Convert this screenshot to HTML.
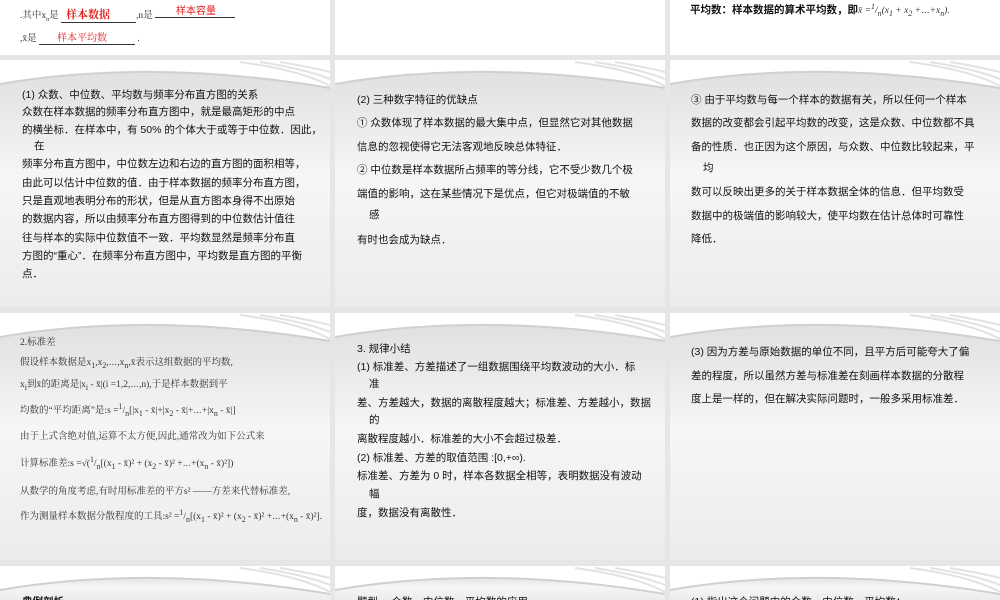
<!DOCTYPE html>
<html style="overflow:hidden;height:600px"><head><meta charset="utf-8"><style>
html,body{overflow:hidden;height:600px}
body{margin:0;width:1000px;background:#e6e6e6;position:relative;font-family:"Liberation Sans","Noto Sans CJK SC",sans-serif;}
.s{position:absolute;background:#fff;overflow:hidden;}
.g{position:absolute;left:0;right:0;top:10px;bottom:0;background:linear-gradient(#e0e0e0,#f6f6f6 45%,#ececec);}
.s svg{position:absolute;left:0;top:0;}
.t{position:absolute;font-size:10.5px;color:#111;white-space:nowrap;}
.sf{font-family:"Liberation Serif","Noto Serif CJK SC",serif;font-size:9.5px;color:#333;}
.r{color:#e02020;}
</style></head><body>
<div class="s" style="left:0;top:0;width:330px;height:55px;"></div>
<div class="s" style="top:0;width:330px;height:55px;left:335px"></div>
<div class="s" style="left:670px;top:0;width:330px;height:55px;"></div>
<div class="t sf" style="left:20px;top:6px;">.其中x<sub style="font-size:6px">n</sub>是 <span style="display:inline-block;width:75px;border-bottom:1px solid #333;" ><b class="r" style="font-size:11px;margin-left:5px">样本数据</b></span>,n是 <span style="display:inline-block;width:80px;border-bottom:1px solid #333;"></span></div>
<div class="t r" style="left:176px;top:2px;font-size:10px;">样本容量</div>
<div class="t sf" style="left:20px;top:29px;">,x̄是 <span style="display:inline-block;width:96px;border-bottom:1px solid #333;"><span class="r" style="margin-left:18px;font-size:10px">样本平均数</span></span> .</div>
<div class="t" style="left:690px;top:2px;font-weight:bold;">平均数：样本数据的算术平均数，即<span class="sf" style="font-weight:normal;font-style:italic">x̄ =<sup>1</sup>/<sub>n</sub>(x<sub>1</sub> + x<sub>2</sub> +⋯+x<sub>n</sub>).</span></div>

<div id="slides"></div>
<script>
var rows=[60,313,566],cols=[0,335,670],h=[247,247,34];
var html='';
rows.forEach(function(y,i){cols.forEach(function(x){
html+='<div class="s" style="left:'+x+'px;top:'+y+'px;width:330px;height:'+h[i]+'px"><div class="g"></div><svg width="330" height="50"><path d="M0 24 Q150 -2 330 28 L330 0 L0 0Z" fill="#fff"/><path d="M0 24 Q150 -2 330 28" stroke="#d0d0d0" stroke-width="2" fill="none"/><path d="M240 2 Q300 10 330 26 M260 2 Q305 9 330 19 M280 2 Q310 7 330 12" stroke="#e2e2e2" stroke-width="2" fill="none"/></svg></div>';
});});
document.getElementById('slides').innerHTML=html;
</script>

<div class="t" style="left:22px;top:87px;">(1) 众数、中位数、平均数与频率分布直方图的关系</div>
<div class="t" style="left:22px;top:104px;">众数在样本数据的频率分布直方图中，就是最高矩形的中点</div>
<div class="t" style="left:22px;top:122px;">的横坐标．在样本中，有 50% 的个体大于或等于中位数．因此，</div>
<div class="t" style="left:34px;top:138px;">在</div>
<div class="t" style="left:22px;top:156px;">频率分布直方图中，中位数左边和右边的直方图的面积相等，</div>
<div class="t" style="left:22px;top:175px;">由此可以估计中位数的值．由于样本数据的频率分布直方图，</div>
<div class="t" style="left:22px;top:193px;">只是直观地表明分布的形状，但是从直方图本身得不出原始</div>
<div class="t" style="left:22px;top:211px;">的数据内容，所以由频率分布直方图得到的中位数估计值往</div>
<div class="t" style="left:22px;top:230px;">往与样本的实际中位数值不一致．平均数显然是频率分布直</div>
<div class="t" style="left:22px;top:248px;">方图的“重心”．在频率分布直方图中，平均数是直方图的平衡</div>
<div class="t" style="left:22px;top:266px;">点．</div>
<div class="t" style="left:357px;top:92px;">(2) 三种数字特征的优缺点</div>
<div class="t" style="left:357px;top:115px;">① 众数体现了样本数据的最大集中点，但显然它对其他数据</div>
<div class="t" style="left:357px;top:139px;">信息的忽视使得它无法客观地反映总体特征．</div>
<div class="t" style="left:357px;top:162px;">② 中位数是样本数据所占频率的等分线，它不受少数几个极</div>
<div class="t" style="left:357px;top:186px;">端值的影响，这在某些情况下是优点，但它对极端值的不敏</div>
<div class="t" style="left:369px;top:207px;">感</div>
<div class="t" style="left:357px;top:232px;">有时也会成为缺点．</div>
<div class="t" style="left:691px;top:92px;">③ 由于平均数与每一个样本的数据有关，所以任何一个样本</div>
<div class="t" style="left:691px;top:115px;">数据的改变都会引起平均数的改变，这是众数、中位数都不具</div>
<div class="t" style="left:691px;top:139px;">备的性质．也正因为这个原因，与众数、中位数比较起来，平</div>
<div class="t" style="left:703px;top:160px;">均</div>
<div class="t" style="left:691px;top:184px;">数可以反映出更多的关于样本数据全体的信息．但平均数受</div>
<div class="t" style="left:691px;top:208px;">数据中的极端值的影响较大，使平均数在估计总体时可靠性</div>
<div class="t" style="left:691px;top:231px;">降低．</div>
<div class="t sf" style="left:20px;top:334px;">2.标准差</div>
<div class="t sf" style="left:20px;top:354px;">假设样本数据是x<sub>1</sub>,x<sub>2</sub>,⋯,x<sub>n</sub>,x̄表示这组数据的平均数,</div>
<div class="t sf" style="left:20px;top:376px;">x<sub>i</sub>到x̄的距离是|x<sub>i</sub> - x̄|(i =1,2,⋯,n),于是样本数据到平</div>
<div class="t sf" style="left:20px;top:402px;">均数的“平均距离”是:s =<sup>1</sup>/<sub>n</sub>[|x<sub>1</sub> - x̄|+|x<sub>2</sub> - x̄|+⋯+|x<sub>n</sub> - x̄|]</div>
<div class="t sf" style="left:20px;top:428px;">由于上式含绝对值,运算不太方便,因此,通常改为如下公式来</div>
<div class="t sf" style="left:20px;top:455px;">计算标准差:s =√(<sup>1</sup>/<sub>n</sub>[(x<sub>1</sub> - x̄)² + (x<sub>2</sub> - x̄)² +⋯+(x<sub>n</sub> - x̄)²])</div>
<div class="t sf" style="left:20px;top:483px;">从数学的角度考虑,有时用标准差的平方s² ——方差来代替标准差,</div>
<div class="t sf" style="left:20px;top:508px;">作为测量样本数据分散程度的工具:s² =<sup>1</sup>/<sub>n</sub>[(x<sub>1</sub> - x̄)² + (x<sub>2</sub> - x̄)² +⋯+(x<sub>n</sub> - x̄)²].</div>
<div class="t" style="left:357px;top:341px;">3. 规律小结</div>
<div class="t" style="left:357px;top:359px;">(1) 标准差、方差描述了一组数据围绕平均数波动的大小．标</div>
<div class="t" style="left:369px;top:376px;">准</div>
<div class="t" style="left:357px;top:395px;">差、方差越大，数据的离散程度越大；标准差、方差越小，数据</div>
<div class="t" style="left:369px;top:412px;">的</div>
<div class="t" style="left:357px;top:431px;">离散程度越小．标准差的大小不会超过极差．</div>
<div class="t" style="left:357px;top:450px;">(2) 标准差、方差的取值范围 :[0,+∞).</div>
<div class="t" style="left:357px;top:468px;">标准差、方差为 0 时，样本各数据全相等，表明数据没有波动</div>
<div class="t" style="left:369px;top:486px;">幅</div>
<div class="t" style="left:357px;top:505px;">度，数据没有离散性．</div>
<div class="t" style="left:691px;top:344px;">(3) 因为方差与原始数据的单位不同，且平方后可能夸大了偏</div>
<div class="t" style="left:691px;top:368px;">差的程度，所以虽然方差与标准差在刻画样本数据的分散程</div>
<div class="t" style="left:691px;top:391px;">度上是一样的，但在解决实际问题时，一般多采用标准差．</div>
<div class="t" style="left:22px;top:594px;font-weight:bold;">典例剖析</div>
<div class="t" style="left:357px;top:594px;">题型一 众数、中位数、平均数的应用</div>
<div class="t" style="left:691px;top:594px;">(1) 指出这个问题中的众数、中位数、平均数；</div>
</body></html>
